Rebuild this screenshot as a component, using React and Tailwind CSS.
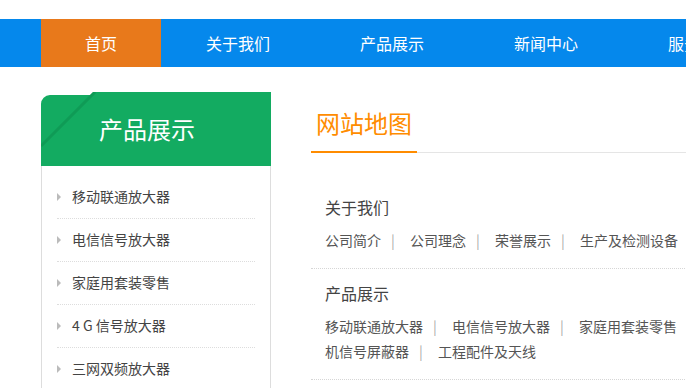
import React from "react"

const navItems = ["关于我们", "产品展示", "新闻中心", "服务项目", "联系我们"]

const sideItems = ["移动联通放大器", "电信信号放大器", "家庭用套装零售", "4 G 信号放大器", "三网双频放大器"]

const sections = [
  { title: "关于我们", links: ["公司简介", "公司理念", "荣誉展示", "生产及检测设备"] },
  {
    title: "产品展示",
    links: ["移动联通放大器", "电信信号放大器", "家庭用套装零售", "4 G 信号放大器", "三网双频放大器", "手机信号屏蔽器", "工程配件及天线"],
  },
]

const App = () => {
  return (
    <div className="w-full min-h-[388px] overflow-hidden bg-white font-['Noto_Sans_CJK_SC',sans-serif]">
      {/* top nav */}
      <div className="mt-[19px] h-[48px] w-[1200px] bg-[#0588ec]">
        <div className="ml-[41px] flex h-full text-[16px] text-white">
          <a className="flex w-[120px] shrink-0 items-center justify-center bg-[#e8791b]">首页</a>
          {navItems.map((item) => (
            <a key={item} className="flex w-[154px] shrink-0 items-center justify-center">
              {item}
            </a>
          ))}
        </div>
      </div>

      <div className="ml-[41px] mt-[25px] flex w-[954px] gap-[40px]">
        {/* sidebar */}
        <div className="w-[230px] shrink-0">
          <div className="relative h-[74px] bg-[#13ab61]">
            <svg className="absolute left-0 top-0" width="60" height="60" viewBox="0 0 60 60">
              <rect x="0" y="0" width="52" height="3" fill="#fff" />
              <path d="M0 3 H9 A9 9 0 0 0 0 12 Z" fill="#fff" />
              <line x1="54" y1="0" x2="0" y2="54" stroke="#0f9b56" strokeWidth="3" />
            </svg>
            <h2 className="pl-[58px] text-[24px] leading-[74px] text-white">产品展示</h2>
          </div>
          <ul className="border-x border-[#dddddd] pt-[10px] pb-[20px]">
            {sideItems.map((item) => (
              <li
                key={item}
                className="mx-[15px] flex h-[43px] items-center border-b border-dotted border-[#dddddd] pb-[1px] text-[14px] text-[#444]"
              >
                <span className="h-0 w-0 border-y-[4px] border-l-[4px] border-y-transparent border-l-[#bbbbbb]" />
                <span className="ml-[11px] whitespace-pre">{item}</span>
              </li>
            ))}
          </ul>
        </div>

        {/* main content */}
        <div className="w-[684px] shrink-0">
          <div className="h-[61px] border-b border-[#e5e5e5]">
            <span className="inline-block border-b-2 border-[#ff8c00] px-[5px] pt-[2px] text-[24px] leading-[57px] text-[#ff8c00]">
              网站地图
            </span>
          </div>

          <div className="mt-[30px]">
            {sections.map((sec) => (
              <div key={sec.title} className="border-b border-dotted border-[#d6d6d6] px-[14px] pt-[12px] pb-[15px]">
                <h3 className="text-[16px] leading-[24px] text-[#444]">{sec.title}</h3>
                <p className="mt-[9px] text-[14px] leading-[25px] text-[#555]">
                  {sec.links.map((link, i) => (
                    <React.Fragment key={link}>
                      <a>{link}</a>
                      {i < sec.links.length - 1 && (
                        <span className="inline-block w-[29px] pl-[10px] text-[#aaaaaa]">|</span>
                      )}
                    </React.Fragment>
                  ))}
                </p>
              </div>
            ))}
          </div>
        </div>
      </div>
    </div>
  )
}

export default App
